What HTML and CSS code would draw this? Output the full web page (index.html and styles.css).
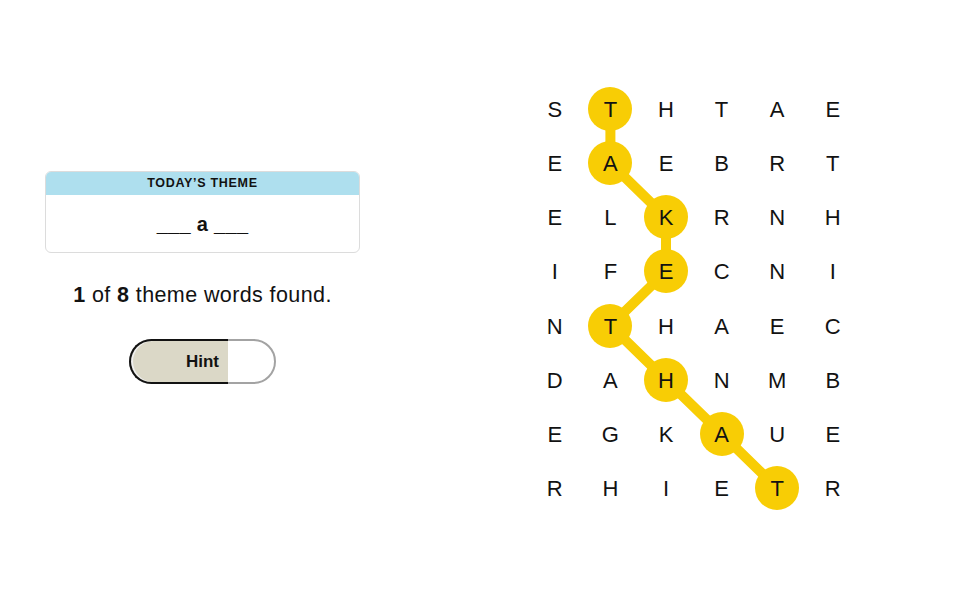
FILE: index.html
```html
<!DOCTYPE html>
<html lang="en">
<head>
    <meta charset="UTF-8">
    <meta name="viewport" content="width=device-width, initial-scale=1.0">
    <title>Strands</title>
    <link rel="stylesheet" href="styles.css">
</head>
<body>
    <div class="page">
        <div class="side">
            <div class="theme-box">
                <div class="theme-head">TODAY’S THEME</div>
                <div class="theme-clue">___ a ___</div>
            </div>
            <p class="found"><b>1</b> of <b>8</b> theme words found.</p>
            <button class="hint">
                <span class="hint-fill"></span>
                <span class="hint-label">Hint</span>
            </button>
        </div>

        <div class="board">
            <svg class="path" width="333.6" height="433.1" viewBox="0 0 333.6 433.1">
                <polyline points="83.4,27.07 83.4,81.2 139,135.35 139,189.5 83.4,243.6 139,297.8 194.6,351.9 250.2,406.05"
                          fill="none" stroke="#f8cd05" stroke-width="10" stroke-linejoin="round"/>
            </svg>
            <div class="grid">
                <span>S</span><span class="on">T</span><span>H</span><span>T</span><span>A</span><span>E</span>
                <span>E</span><span class="on">A</span><span>E</span><span>B</span><span>R</span><span>T</span>
                <span>E</span><span>L</span><span class="on">K</span><span>R</span><span>N</span><span>H</span>
                <span>I</span><span>F</span><span class="on">E</span><span>C</span><span>N</span><span>I</span>
                <span>N</span><span class="on">T</span><span>H</span><span>A</span><span>E</span><span>C</span>
                <span>D</span><span>A</span><span class="on">H</span><span>N</span><span>M</span><span>B</span>
                <span>E</span><span>G</span><span>K</span><span class="on">A</span><span>U</span><span>E</span>
                <span>R</span><span>H</span><span>I</span><span>E</span><span class="on">T</span><span>R</span>
            </div>
        </div>
    </div>
</body>
</html>
```

FILE: styles.css
```css
* {
    margin: 0;
    padding: 0;
    box-sizing: border-box;
    font-family: 'Liberation Sans', Arial, sans-serif;
}
body {
    background: #fff;
    color: #121212;
}
.page {
    display: flex;
    align-items: flex-start;
}
.side {
    width: 315px;
    margin-left: 45px;
    margin-top: 171px;
    display: flex;
    flex-direction: column;
    align-items: center;
}
.theme-box {
    width: 100%;
    border: 1px solid #dcdcdc;
    border-radius: 6px;
    overflow: hidden;
}
.theme-head {
    background: #aedfee;
    height: 24px;
    line-height: 25px;
    text-align: center;
    font-size: 12.5px;
    font-weight: bold;
    letter-spacing: 0.7px;
    margin: -1px -1px 0;
}
.theme-clue {
    height: 57px;
    line-height: 58px;
    text-align: center;
    font-size: 20px;
    font-weight: bold;
    letter-spacing: 0.3px;
}
.found {
    margin-top: 29px;
    font-size: 21.5px;
    line-height: 26px;
    letter-spacing: 0.4px;
}
.hint {
    position: relative;
    margin-top: 31px;
    width: 147px;
    height: 45px;
    border: 2px solid #a3a3a3;
    border-radius: 23px;
    background: #fff;
    cursor: pointer;
}
.hint-fill {
    position: absolute;
    left: -2px;
    top: -2px;
    bottom: -2px;
    width: 99px;
    border: 2px solid #121212;
    border-right: none;
    border-radius: 23px 0 0 23px;
    background: #dbd8c7;
    box-shadow: inset 2px 0 0 #efefef;
}
.hint-label {
    position: relative;
    font-size: 17px;
    font-weight: bold;
    color: #121212;
}
.board {
    position: relative;
    margin-left: 167px;
    margin-top: 82px;
}
.path {
    position: absolute;
    left: 0;
    top: 0;
}
.grid {
    position: relative;
    display: grid;
    grid-template-columns: repeat(6, 55.6px);
    grid-template-rows: repeat(8, 54.14px);
}
.grid span {
    display: flex;
    align-items: center;
    justify-content: center;
    font-size: 22px;
    padding-top: 2px;
    width: 44px;
    height: 44px;
    margin: auto;
    border-radius: 50%;
}
.grid span.on {
    background: #f8cd05;
}
```
